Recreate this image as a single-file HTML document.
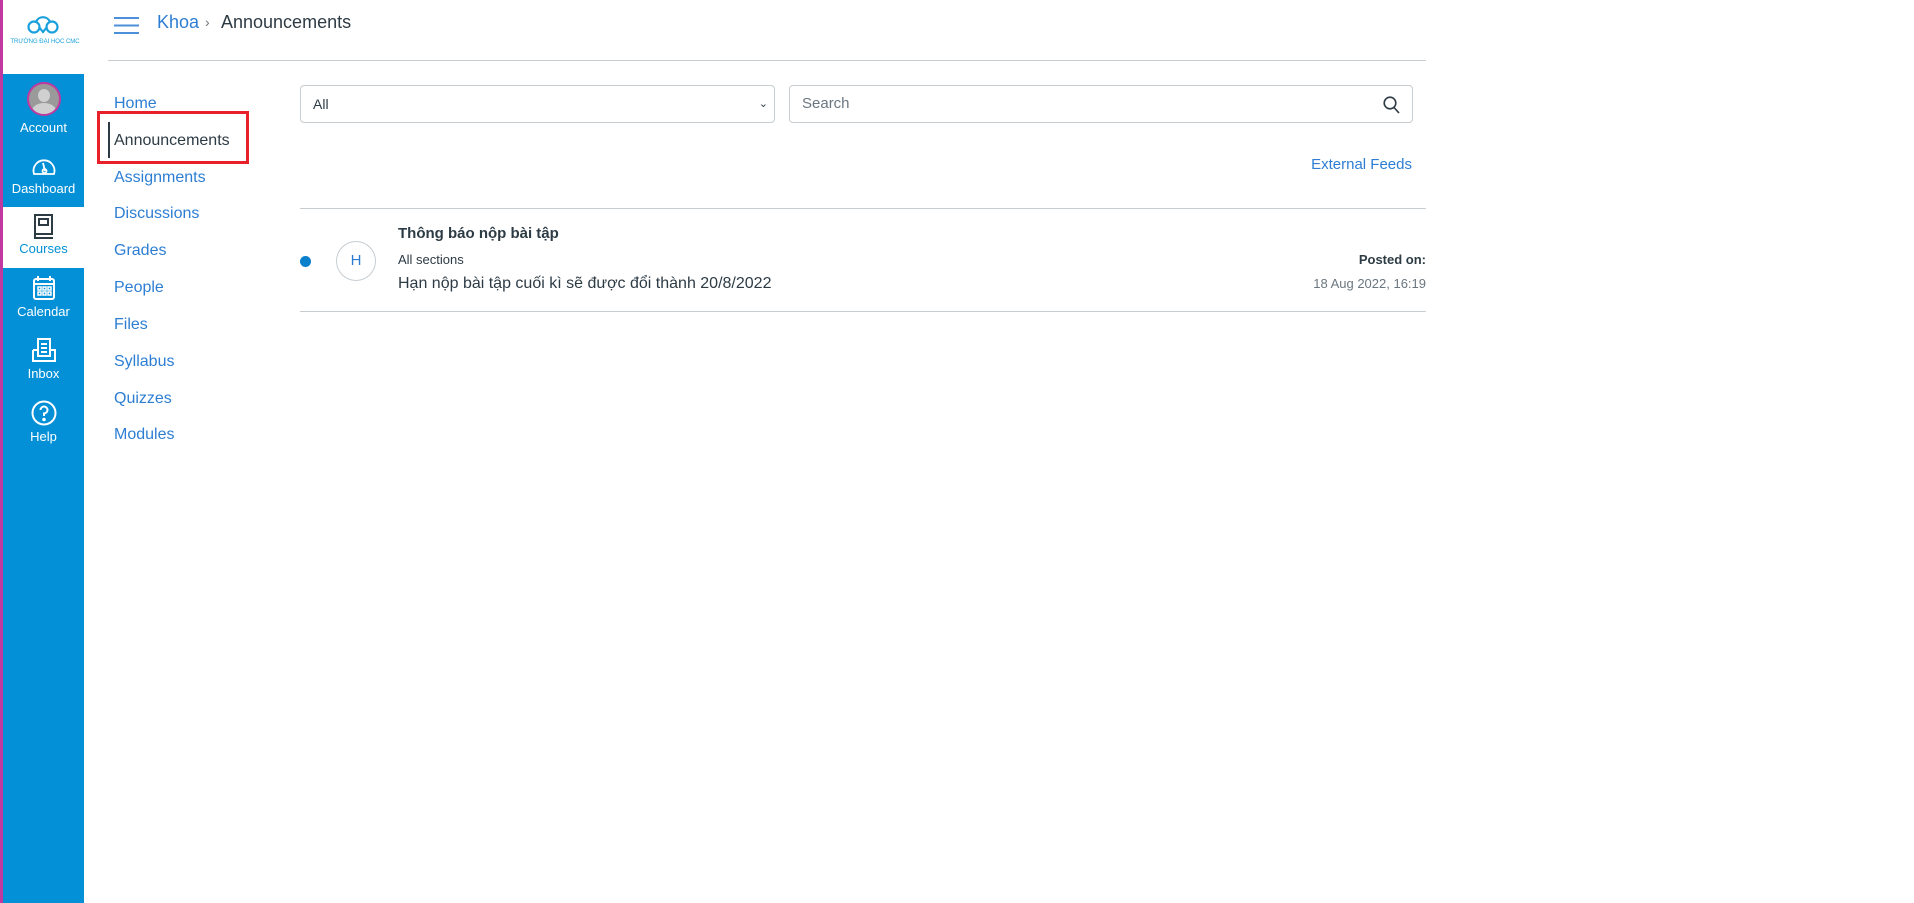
<!DOCTYPE html>
<html><head><meta charset="utf-8"><style>
*{margin:0;padding:0;box-sizing:border-box}
body{width:1914px;height:903px;background:#fff;font-family:"Liberation Sans",sans-serif;position:relative;overflow:hidden;color:#2d3b45}
.abs{position:absolute}
.strip{left:0;top:0;width:3px;height:903px;background:#c0399f}
.side{left:3px;top:74px;width:81px;height:829px;background:#0490d6}
.cw{left:3px;top:207px;width:81px;height:61px;background:#fff}
.lbl{position:absolute;left:3px;width:81px;text-align:center;font-size:13px;color:#fff}
.nav a{position:absolute;left:114px;font-size:16px;color:#2d7ed3;text-decoration:none;line-height:20px}
</style></head><body>
<div class="abs strip"></div>
<svg class="abs" style="left:26px;top:12px" width="34" height="24" viewBox="0 0 34 24"><g fill="none" stroke="#1aa0dc" stroke-width="2.2"><circle cx="8" cy="15" r="5.5"/><circle cx="26" cy="15" r="5.5"/><path d="M10 10 A7.5 7.5 0 0 1 24 10"/><path d="M13 15 L17 20 L21 15"/></g></svg>
<div class="abs" style="left:3px;top:39px;width:84px;text-align:center;font-size:6px;color:#1aa0dc;white-space:nowrap">TRƯỜNG ĐẠI HỌC CMC</div>
<div class="abs side"></div>
<div class="abs cw"></div>
<div class="abs" style="left:27px;top:82px;width:34px;height:34px;border-radius:50%;border:2px solid #c0399f;background:#9a9a9a;overflow:hidden"><div style="position:absolute;left:9px;top:5px;width:12px;height:13px;border-radius:50%;background:#d0d0d0"></div><div style="position:absolute;left:3px;top:19px;width:24px;height:16px;border-radius:50%;background:#d0d0d0"></div></div>
<div class="lbl" style="top:120px">Account</div>
<svg class="abs" style="left:30px;top:154px" width="28" height="24" viewBox="0 0 28 24" fill="none" stroke="#fff" stroke-width="1.8"><path d="M4 20 A10.5 10.5 0 1 1 24 20 Z"/><path d="M13 9 L15 17"/><circle cx="14.5" cy="17" r="2"/></svg>
<div class="lbl" style="top:181px">Dashboard</div>
<svg class="abs" style="left:33px;top:214px" width="22" height="26" viewBox="0 0 22 26" fill="none" stroke="#2d3b45" stroke-width="2"><rect x="2" y="1" width="17" height="19"/><rect x="6" y="5" width="9" height="6"/><path d="M2 20 V24 H20"/></svg>
<div class="lbl" style="top:241px;color:#0490d6">Courses</div>
<svg class="abs" style="left:32px;top:275px" width="24" height="26" viewBox="0 0 24 26" fill="none" stroke="#fff" stroke-width="2"><rect x="2" y="4" width="20" height="20" rx="2"/><path d="M6 1V6M18 1V6M2 9H22"/><g stroke-width="1.5"><rect x="6" y="12" width="3" height="3"/><rect x="11" y="12" width="3" height="3"/><rect x="16" y="12" width="3" height="3"/><rect x="6" y="17" width="3" height="3"/><rect x="11" y="17" width="3" height="3"/><rect x="16" y="17" width="3" height="3"/></g></svg>
<div class="lbl" style="top:304px">Calendar</div>
<svg class="abs" style="left:31px;top:338px" width="26" height="25" viewBox="0 0 26 25" fill="none" stroke="#fff" stroke-width="2"><rect x="7" y="1" width="12" height="17"/><path d="M10 6H16M10 10H16M10 14H16"/><path d="M2 12V23H24V12H19M2 12H7"/></svg>
<div class="lbl" style="top:366px">Inbox</div>
<svg class="abs" style="left:31px;top:400px" width="26" height="26" viewBox="0 0 26 26" fill="none" stroke="#fff" stroke-width="2"><circle cx="13" cy="13" r="11.5"/><path d="M9.5 10 A3.5 3.5 0 1 1 13 13.5 V16"/><circle cx="13" cy="19.5" r="0.8" fill="#fff"/></svg>
<div class="lbl" style="top:429px">Help</div>

<svg class="abs" style="left:114px;top:17px" width="25" height="17"><g stroke="#4d8fd8" stroke-width="2"><path d="M0 1H25M0 8.5H25M0 16H25"/></g></svg>
<div class="abs" style="left:157px;top:12px;font-size:18px;color:#2d7ed3">Khoa</div>
<div class="abs" style="left:205px;top:14px;font-size:14px;color:#6b7780">›</div>
<div class="abs" style="left:221px;top:12px;font-size:18px;color:#2d3b45">Announcements</div>
<div class="abs" style="left:108px;top:60px;width:1318px;height:1px;background:#c7cdd1"></div>

<div class="nav">
<a style="top:94px">Home</a>
<a style="top:131px;color:#2d3b45">Announcements</a>
<a style="top:168px">Assignments</a>
<a style="top:204px">Discussions</a>
<a style="top:241px">Grades</a>
<a style="top:278px">People</a>
<a style="top:315px">Files</a>
<a style="top:352px">Syllabus</a>
<a style="top:389px">Quizzes</a>
<a style="top:425px">Modules</a>
</div>
<div class="abs" style="left:108px;top:122px;width:2px;height:36px;background:#2d3b45"></div>
<div class="abs" style="left:97px;top:111px;width:152px;height:53px;border:3px solid #e8202a"></div>

<div class="abs" style="left:300px;top:85px;width:475px;height:38px;border:1px solid #c7cdd1;border-radius:4px;font-size:14px;line-height:36px;padding-left:12px">All<span style="position:absolute;right:6px;top:0;font-size:11px">&#8964;</span></div>
<div class="abs" style="left:789px;top:85px;width:624px;height:38px;border:1px solid #c7cdd1;border-radius:4px;font-size:15px;line-height:36px;padding-left:12px;color:#6b7780">Search
<svg style="position:absolute;right:12px;top:10px" width="17" height="18" fill="none" stroke="#2d3b45" stroke-width="1.6"><circle cx="7" cy="7" r="5.8"/><path d="M11 11.5L16 17"/></svg></div>
<div class="abs" style="right:502px;top:156px;font-size:15px;color:#2d7ed3">External Feeds</div>
<div class="abs" style="left:300px;top:208px;width:1126px;height:1px;background:#c7cdd1"></div>
<div class="abs" style="left:300px;top:256px;width:11px;height:11px;border-radius:50%;background:#0a7fcc"></div>
<div class="abs" style="left:336px;top:241px;width:40px;height:40px;border-radius:50%;border:1px solid #c7cdd1;text-align:center;line-height:38px;font-size:15px;color:#2d7ed3">H</div>
<div class="abs" style="left:398px;top:225px;font-size:15px;font-weight:bold">Thông báo nộp bài tập</div>
<div class="abs" style="left:398px;top:252px;font-size:13px">All sections</div>
<div class="abs" style="left:398px;top:275px;font-size:16px">Hạn nộp bài tập cuối kì sẽ được đổi thành 20/8/2022</div>
<div class="abs" style="right:488px;top:252px;font-size:13px;font-weight:bold">Posted on:</div>
<div class="abs" style="right:488px;top:276px;font-size:13px;color:#6b7780">18 Aug 2022, 16:19</div>
<div class="abs" style="left:300px;top:311px;width:1126px;height:1px;background:#c7cdd1"></div>
</body></html>
